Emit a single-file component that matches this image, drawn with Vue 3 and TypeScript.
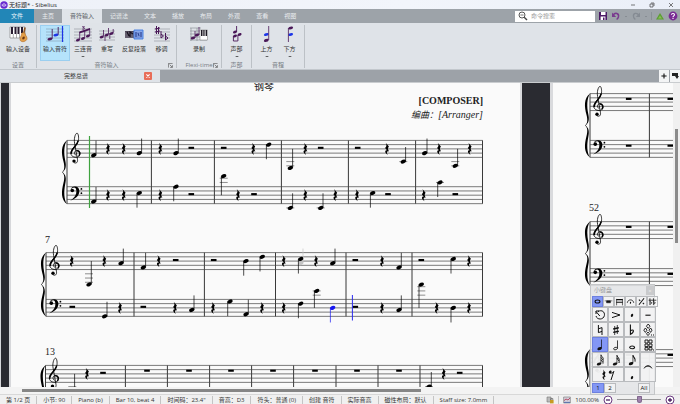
<script setup lang="ts">
interface Shape { d: string; f?: string; s?: string; w?: number }
interface Tool { label: string; icon: Shape[]; width: number; drop?: boolean; active?: boolean }
interface Group { title: string; launcher?: boolean; tools: Tool[] }
interface Item { kind: 'q' | 'r' | 'h' | 'w'; x: number; step: number; up: boolean; color: string }
interface Staff { top: number; clef: 'g' | 'f'; items: Item[] }
interface System { left: number; right: number; bars: number[]; staves: Staff[] }

const P = '#4a1858'
const B = '#1c35e8'
const G = '#8d9299'
const lines = 'M1 3H19M1 6H19M1 9H19M1 12H19M1 15H19'
const head = (x: number, y: number, r = 2) => `M${x - r} ${y + 0.6}C${x - r} ${y - 1.6} ${x + r} ${y - 2.4} ${x + r} ${y - 0.4}C${x + r} ${y + 1.8} ${x - r} ${y + 2.2} ${x - r} ${y + 0.6}Z`

const menus = ['主页', '音符输入', '记谱法', '文本', '播放', '布局', '外观', '查看', '视图']

const groups: Group[] = [
  { title: '设置', tools: [{ label: '输入设备', width: 30, icon: [
    { d: 'M2 1H17V12H2Z', f: '#fff', s: '#777', w: 0.6 },
    { d: 'M3 1H5V8H3ZM6.5 1H8.5V8H6.5ZM9.5 1H11.5V8H9.5ZM13 1H15V7H13Z', f: '#281c30' },
    { d: 'M5.3 8V12M8.5 8V12M11.5 8V12', s: '#777', w: 0.6 },
    { d: 'M15.5 8.5L17 1.5', s: '#8e5625', w: 1.6 },
    { d: 'M13.5 7.5C15 6 17 6.5 17.2 8C17.2 9.6 19 10 19 12.5C19 16 12 17 12 13.3C12 10.5 13.8 10 13.5 7.5Z', f: '#e4a04a', s: '#b06a25', w: 0.6 },
    { d: head(15.5, 12, 1.3), f: '#6b3713' } ] }] },
  { title: '音符输入', launcher: true, tools: [
    { label: '输入音符', width: 30, active: true, icon: [
      { d: lines, s: '#7f9cae', w: 0.6 }, { d: head(5, 13, 2.5), f: P }, { d: 'M7.2 12.5V3', s: P, w: 0.9 },
      { d: head(11, 9, 2.5), f: B }, { d: 'M13.2 8.5V1', s: P, w: 0.9 }, { d: 'M17.5 0V16', s: B, w: 1.2 } ] },
    { label: '三连音', width: 26, drop: true, icon: [
      { d: lines, s: G, w: 0.6 }, { d: head(5, 14) + head(10, 12.5) + head(15, 10), f: P },
      { d: 'M6.7 14V6M11.7 12V4.5M16.7 10V3', s: P, w: 0.8 }, { d: 'M6.4 5.5L17 2V4L6.4 7.5Z', f: P },
      { d: 'M9 .8H11.5L10.2 1.9C12.5 2 11.5 4 9.2 3', s: P, w: 0.8 } ] },
    { label: '重写', width: 22, icon: [
      { d: 'M2 5H18M2 8H18M2 11H18M2 14H18', s: G, w: 0.6 }, { d: head(4.8, 11) + head(9.8, 9) + head(14.5, 7.5), f: P },
      { d: 'M6.5 10V4M8 9V15M12.8 7V13M16.2 7V3M11.5 8V2', s: P, w: 0.8 } ] },
    { label: '反复段落', width: 32, icon: [
      { d: 'M1 5H11V12H1Z', f: '#4b4455' }, { d: 'M1 7H11M1 9H11M1 11H11', s: '#b5b2bd', w: 0.5 },
      { d: 'M3 6L5 10M6 11V6L9 8', s: '#16101e', w: 1.2 }, { d: 'M10 4H19V13H10Z', f: '#8aa8ea', s: '#3c78e0', w: 0.9 },
      { d: 'M11 7H18M11 9H18M11 11H18', s: '#3c5ba7', w: 0.5 }, { d: 'M12 11V6M14 7L15 10M17 11V6', s: '#293f91', w: 1 } ] },
    { label: '移调', width: 23, icon: [
      { d: 'M2 3H18M2 6H18M2 9H18M2 12H18M2 15H18', s: G, w: 0.6 },
      { d: 'M4.5 0V8M6.5 1V8M3 3L8 2M3 6L8 5M9 5V12L11.5 10L9 8M13.5 7V14L16 12L13.5 10', s: P, w: 1 } ] } ] },
  { title: 'Flexi-time', launcher: true, tools: [{ label: '录制', width: 38, icon: [
    { d: 'M2 2V15M8 2V15M1 2H12M1 5H12M1 8H12M1 11H12M1 14H18', s: G, w: 0.7 },
    { d: head(4, 12, 2.3) + head(8, 9, 2.2), f: P }, { d: 'M6 12V5M10 9V1', s: P, w: 0.8 },
    { d: 'M11 4H18.5V14H11Z', f: '#fff', s: '#777', w: 0.5 }, { d: 'M12 4H13.5V10H12ZM14.3 4H15.6V10H14.3ZM16.6 4H18V10H16.6Z', f: '#1c1822' } ] }] },
  { title: '声部', tools: [{ label: '声部', width: 23, drop: true, icon: [
    { d: head(8, 6) + head(8, 10) + head(12.6, 8.5), f: P }, { d: 'M9.6 6V0M6.4 10V15H10.8M10.9 9V15', s: P, w: 0.9 } ] }] },
  { title: '音程', tools: [
    { label: '上方', width: 23, drop: true, icon: [
      { d: head(9.3, 8.5, 2.4), f: B }, { d: head(9.3, 14.4, 2.4), f: P }, { d: 'M11.7 0V14', s: P, w: 0.8 } ] },
    { label: '下方', width: 23, drop: true, icon: [
      { d: head(10.7, 8.5, 2.4), f: B }, { d: head(10.7, 2, 2.4), f: P }, { d: 'M8.4 2V16', s: P, w: 0.8 } ] } ] },
]

/* Tokens: q = quarter note with its step below the top line and stem, r/h/w = quarter, half, whole rest. */
function parse(src: string): Item[] {
  return src.split(' ').map((t) => {
    const [head0, pitch = '0', dir = 'u', color = '#000'] = t.split(',')
    return { kind: head0[0] as Item['kind'], x: Number(head0.slice(1)), step: Number(pitch), up: dir === 'u', color }
  })
}

const systems: System[] = [
  { left: 67, right: 482.6, bars: [151.4, 214.4, 281.4, 348.4, 415.6, 482.5], staves: [
    { top: 140.4, clef: 'g', items: parse('q93.7,7 r108 r123.7 q139.3,6 r160.3 q176,6 h191.3 h223.7 r253.3 q268.7,2,d q290.3,13 r305.3 h320.7 h357.7 r387 q403.3,10 q424.7,6 r439 q455.3,12 r469.7') },
    { top: 186.7, clef: 'f', items: parse('q93.7,7 r108 r123.7 q139.3,3,d r160.3 q176,0,d h191.3 q223.7,-5,d r238 h254 q290.3,10 r305.3 q320.7,10 r335.3 r357 q372.7,3,d h388 r423.7 q440,-2,d h455.3') } ] },
  { left: 46, right: 482.6, bars: [134, 204.4, 275.5, 346, 412, 482.5], staves: [
    { top: 252.6, clef: 'g', items: parse('r71.7 q89,15 r104.3 q121,5 q143.3,7 r158.7 h175.7 h213.7 q246,4,d q262.3,2,d r283.7 q300.7,5,u,#c4c4c4 q300.7,3,d r316 q332.7,5 h355.3 r382 q399,7 h421.3 q453.3,3,d r469') },
    { top: 299.4, clef: 'f', items: parse('h72.3 q104.7,8 r120 h143.3 r175 q191.7,5 r213 q230,1,d q246,7 r262 r283.7 q300.7,2,d q316.7,-4,d q332.7,4,d,#1818f0 h355.3 r382 q399,5 q421.3,-7,d r436.7 q453.3,4,d r469') } ] },
  { left: 45.5, right: 482.6, bars: [125.4, 167.4, 209.6, 251.6, 293.6, 336, 378, 420, 482.5], staves: [
    { top: 365.4, clef: 'g', items: parse('q72.3,12 r87 h103 w147 w189 w231 w273 w315 w357 w399 q429,10 r443.7 h459.7') },
    { top: 412, clef: 'f', items: [] } ] },
  { left: 590, right: 1200, bars: [649.4], staves: [
    { top: 93.6, clef: 'g', items: parse('w628.7 w670.3') }, { top: 140.4, clef: 'f', items: parse('w628.7 w670.3') } ] },
  { left: 590, right: 1200, bars: [649.4], staves: [
    { top: 221.6, clef: 'g', items: parse('w628.7 w670.3') }, { top: 268.6, clef: 'f', items: parse('w628.7 w670.3') } ] },
  { left: 590, right: 1200, bars: [649.4], staves: [
    { top: 349.6, clef: 'g', items: parse('w628.7 w670.3') }, { top: 396.4, clef: 'f', items: [] } ] },
]

const HALF = 2.12
const yOf = (s: Staff, step: number) => s.top + step * HALF
const stemX = (n: Item) => n.x + (n.up ? 2.3 : -2.3)
function stemEnd(s: Staff, n: Item): number {
  const y = yOf(s, n.step)
  return n.up ? Math.min(y - 14.6, yOf(s, 4)) : Math.max(y + 14.6, yOf(s, 4))
}
function ledgers(n: Item): number[] {
  const out: number[] = []
  for (let k = 10; k <= n.step; k += 2) out.push(k)
  for (let k = -2; k >= n.step; k -= 2) out.push(k)
  return out
}

const restPath = 'M-1.3 -6.2L1.9 -2.4C.5 -.8 .8 .4 2.1 2.6C-.2 1.8 -.7 3.8 .8 6C-2.8 3.8 -2.2 .9 .2 1.5L-1.9 -1C-.2 -2.6 -.2 -4 -1.3 -6.2Z'
const bracePath = 'M5 -32C-1.4 -27 -.6 -19 1.4 -11C3 -5 2.4 -2 0 0C2.4 2 3 5 1.4 11C-.6 19 -1.4 27 5 32C1.8 27 1.8 19 3.2 12C4.6 6 3.8 2.6 .6 0C3.8 -2.6 4.6 -6 3.2 -12C1.8 -19 1.8 -27 5 -32Z'

const note = (x: number, y: number, h: number) => head(x, y, 2.2) + `M${x + 1.6} ${y}V${y - h}H${x + 2.3}V${y}Z`
const K = '#111'
const padTabs: { name: string; icon: Shape[]; on?: boolean }[] = [
  { name: '常用音符', on: true, icon: [{ d: 'M3.2 7C3.2 3.8 10.8 3.8 10.8 7C10.8 10.2 3.2 10.2 3.2 7Z', s: K, w: 1.7 }] },
  { name: '更多音符', icon: [{ d: 'M1 6H13M4 6V9H10V6Z', f: K, s: K, w: 0.8 }] },
  { name: '符杠', icon: [{ d: 'M2 3H12V5H2ZM2 7.5H12V9H2Z', f: K }, { d: 'M2.5 3V13M11.6 3V13', s: K, w: 1 }] },
  { name: '演奏法', icon: [{ d: 'M2 9C3 3 11 3 12 9', s: K, w: 1.3 }, { d: head(7, 9, 1), f: K }] },
  { name: '爵士', icon: [{ d: 'M3 12L11 2M3 4L5 6M9 9L11 11', s: K, w: 1.6 }] },
  { name: '变音记号', icon: [{ d: 'M3 2V12L6 9L3 7M8.5 2V12L11.5 9L8.5 7M1 5H13', s: K, w: 1.2 }] },
]
interface Key { name: string; icon: Shape[]; cls?: string }
const keys: Key[] = [
  { name: '输入', icon: [{ d: 'M5 3.5C9 1.4 12 4 11.4 7.5C10.5 12 4 12.2 3 8M6.8 8L3 3.5M3 6V3H6', s: K, w: 1 }] },
  { name: '重音', icon: [{ d: 'M3 4.4L11 7L3 9.6', s: K, w: 1 }] },
  { name: '断奏', icon: [{ d: head(7, 7.4, 1.2), f: K }] },
  { name: '保持音', icon: [{ d: 'M4.4 7.2H9.6', s: K, w: 1.1 }] },
  { name: '还原', icon: [{ d: 'M5.4 2V9.6L9 8.4M5.4 5.8L9 4.6V12', s: K, w: 1 }] },
  { name: '升号', icon: [{ d: 'M5.7 3V12M8.3 2V11', s: K, w: 0.8 }, { d: 'M4.2 6L9.8 4.8M4.2 9.4L9.8 8.2', s: K, w: 1.4 }] },
  { name: '降号', icon: [{ d: 'M5.4 1.6V11.4C10 8.6 8.8 5.6 5.4 7.8', s: K, w: 1.1 }] },
  { name: '更多升降号', icon: [{ d: 'M7.2 1L9 3.2L7.2 5.4L5.4 3.2ZM4.4 5L6 7.2L4.4 9.4L2.8 7.2ZM9.6 5L11 7.2L9.6 9.4L8 7.2ZM7 9L8.5 10.8L7 12.6L5.5 10.8Z', s: K, w: 0.9 }, { d: 'M10 12H11M12 12H13', s: K, w: 1 }] },
  { name: '四分音符', cls: 'on', icon: [{ d: note(6.6, 10.6, 9), f: K }] },
  { name: '二分音符', icon: [{ d: 'M4.6 10.8C5 9 8.4 8.8 8.4 10.2C8.2 12 4.8 12.4 4.6 10.8Z', s: K, w: 0.9 }, { d: 'M8.5 10.4V2.4', s: K, w: 0.8 }] },
  { name: '全音符', icon: [{ d: 'M4.6 9.4C5 7.6 9.4 7.6 9.6 9.4C9.4 11.2 5 11.2 4.6 9.4Z', s: K, w: 1.1 }] },
  { name: '更多时值', icon: [{ d: 'M4 2H7V5H4ZM8 2H11V5H8ZM4 6H7V8.6H4ZM8 6H11V8.6H8ZM4 9.6H7V12H4ZM8 9.6H11V12H8Z', s: K, w: 0.9 }, { d: 'M12 12H13', s: K, w: 1 }] },
  { name: '三十二分音符', icon: [{ d: note(6, 11, 9.6), f: K }, { d: 'M8 2C8.4 4 11 4 10 7M8 4.4C8.4 6.4 11 6.4 10 9M8 6.8C8.4 8.6 10.6 8.6 10 10.6', s: K, w: 0.9 }] },
  { name: '十六分音符', icon: [{ d: note(6, 11, 9), f: K }, { d: 'M8 2.4C8.4 4.8 11 5 10 8M8 5C8.4 7 11 7.4 10 10', s: K, w: 1 }] },
  { name: '八分音符', icon: [{ d: note(6, 10.6, 8.6), f: K }, { d: 'M8 2.4C8.4 5 11.2 5 10 8.6', s: K, w: 1.1 }] },
  { name: '连音线', cls: 'tall', icon: [{ d: 'M3 8.4C5 4.6 9 4.6 11 8.4C9 5.6 5 5.6 3 8.4Z', f: K, s: K, w: 0.5 }] },
  { name: '休止符', cls: 'wide', icon: [{ d: 'M2 1.6L4.6 4.8C3.4 6 3.6 7 4.8 9C3 8.4 2.6 10 3.8 12C.6 10 1.2 7.8 3.2 8.2L1.2 6C2.8 4.4 2.8 3.4 2 1.6Z' + head(9.2, 4, 1.4), f: K }, { d: 'M9 5C11 5.4 12 4.6 12.8 3.4L10 12', s: K, w: 1 }] },
  { name: '附点', icon: [{ d: head(7, 9.6, 1.2), f: K }] },
]

const status = ['第 1/2 页', '小节: 90', 'Piano (b)', 'Bar 10, beat 4', '时间码：23.4"', '音高：D3', '符头：普通 (0)', '创建 音符', '实际音高', '磁性布局：默认', 'Staff size: 7.0mm']
</script>

<template>
  <div class="app">
    <header class="title">
      <svg class="logo" viewBox="0 0 8 8"><circle cx="4" cy="4" r="3.7" fill="#6a2bd0" /><path d="M2.3 5.2V3.2M4 6V2M5.7 5.2V3.2" stroke="#fff" stroke-width=".8" /></svg>
      <span>无标题* - Sibelius</span>
      <div class="window">
        <button aria-label="最小化"><svg viewBox="0 0 6 6"><path d="M1 3H5" /></svg></button>
        <button aria-label="还原"><svg viewBox="0 0 6 6"><path d="M1 2H4V5H1ZM2 1H5V4" /></svg></button>
        <button aria-label="关闭"><svg viewBox="0 0 6 6"><path d="M1 1L5 5M5 1L1 5" /></svg></button>
      </div>
    </header>

    <nav class="menu">
      <button class="file">文件</button>
      <button v-for="m in menus" :key="m" :class="{ current: m === '音符输入' }">{{ m }}</button>
      <div class="quick">
        <label class="search">
          <svg viewBox="0 0 10 10"><circle cx="4" cy="4" r="3" fill="none" stroke="#555" /><path d="M6.2 6.2L9 9" stroke="#444" stroke-width="1.4" /><path d="M2.4 4H5.6" stroke="#777" /></svg>
          <input type="text" placeholder="命令搜索" aria-label="命令搜索" />
        </label>
        <button aria-label="保存"><svg viewBox="0 0 10 10"><path d="M1 1H9V9H1Z" fill="#4c1a66" /><path d="M3 1H7.5V4H3ZM2.6 5.5H7.4V9H2.6Z" fill="#fff" /><path d="M5 6.5H6.5V9H5Z" fill="#4c1a66" /></svg></button>
        <button aria-label="撤销"><svg viewBox="0 0 10 10"><path d="M2 4.4C4 1 8.4 2 7.4 6C7 7.4 6.4 8 5.6 8.4" fill="none" stroke="#7a3b8f" stroke-width="1.5" /><path d="M1 1.6V6H5.2Z" fill="#7a3b8f" /></svg></button>
        <i class="arrow"></i>
        <button aria-label="重做"><svg viewBox="0 0 10 10"><path d="M8 4.4C6 1 1.6 2 2.6 6C3 7.4 3.6 8 4.4 8.4" fill="none" stroke="#858b93" stroke-width="1.3" /><path d="M9 1.6V6H4.8Z" fill="#858b93" /></svg></button>
        <i class="arrow"></i>
        <i class="rule"></i>
        <button aria-label="上传"><svg viewBox="0 0 10 10"><path d="M5 2L9 8.4H1Z" fill="#5c9e32" /><path d="M5 4.4L7 7.6H3Z" fill="#86bd55" /></svg></button>
        <button aria-label="帮助"><svg viewBox="0 0 10 10"><circle cx="5" cy="5" r="4.4" fill="#792a94" /><path d="M3.4 3.8C3.6 2 6.8 2.2 6.4 4C6.2 5 5 5 5 6.2M5 7V8" fill="none" stroke="#fff" stroke-width="1.1" /></svg></button>
      </div>
    </nav>

    <section class="ribbon">
      <div v-for="(g, gi) in groups" :key="gi" class="group">
        <div class="tools">
          <button v-for="t in g.tools" :key="t.label" class="tool" :class="{ active: t.active }" :style="{ width: t.width + 'px' }">
            <svg viewBox="0 0 20 17"><path v-for="(s, i) in t.icon" :key="i" :d="s.d" :fill="s.f ?? 'none'" :stroke="s.s ?? 'none'" :stroke-width="s.w ?? 0" /></svg>
            <span>{{ t.label }}</span>
            <i v-if="t.drop" class="arrow dark"></i>
          </button>
        </div>
        <footer>
          <span>{{ g.title }}</span>
          <button v-if="g.launcher" :aria-label="g.title + '设置'"><svg viewBox="0 0 6 6"><path d="M.5 5.5V.5H5.5M2 2L5 5M5.3 2.6V5.3H2.6" fill="none" stroke="#555" stroke-width=".8" /></svg></button>
        </footer>
      </div>
    </section>

    <div class="docs">
      <div class="doc"><span>完整总谱</span><button aria-label="关闭标签"><svg viewBox="0 0 8 8"><path d="M2.4 2.4L5.6 5.6M5.6 2.4L2.4 5.6" stroke="#fff" stroke-width="1.1" /></svg></button></div>
      <button class="small" aria-label="新建标签"><svg viewBox="0 0 10 10"><path d="M2.4 5H7.6M5 2.4V7.6" stroke="#111" stroke-width="1.1" /></svg></button>
      <button class="small" aria-label="标签菜单"><svg viewBox="0 0 10 10"><path d="M2 2H8V5H2ZM5 5H9L7 8Z" fill="#222" /></svg></button>
    </div>

    <main class="stage">
      <svg class="score" role="img" aria-label="乐谱">
        <g transform="translate(0 -83)">
          <rect x="0" y="83" width="100%" height="100%" fill="#fafafa" />
          <g class="desk">
            <rect x="0" y="83" width="11" height="100%" fill="#d6d7da" /><rect x="1" y="83" width="8" height="100%" fill="#2a2b31" />
            <rect x="520" y="83" width="33" height="100%" fill="#d9dadd" /><rect x="522" y="83" width="28" height="100%" fill="#2a2b31" />
          </g>
          <text x="264" y="90" class="part" text-anchor="middle">钢琴</text>
          <text x="483" y="104" class="composer" text-anchor="end">[COMPOSER]</text>
          <text x="483" y="118" class="arranger" text-anchor="end"><tspan class="han">编曲：</tspan>[Arranger]</text>
          <text x="45" y="243" class="bar-no">7</text>
          <text x="45" y="355" class="bar-no">13</text>
          <text x="589" y="211" class="bar-no">52</text>
          <g v-for="(sys, si) in systems" :key="si">
            <path :d="bracePath" :transform="`translate(${sys.left - 5} ${sys.staves[0].top + 31.8})`" />
            <g class="bars">
              <path v-for="x in [sys.left, ...sys.bars]" :key="x" :d="`M${x} ${sys.staves[0].top}V${sys.staves[1].top + 17}`" />
            </g>
            <g v-for="(st, ti) in sys.staves" :key="ti">
              <path v-for="n in 5" :key="n" class="line" :d="`M${sys.left} ${yOf(st, (n - 1) * 2)}H${sys.right}`" />
              <g v-if="st.clef === 'g'" :transform="`translate(${sys.left + 8.6} ${yOf(st, 6)})`" class="clef">
                <path d="M.6 2.2C-1.8 1.4 -1.6 -2.4 1.2 -2.7C4.6 -2.7 5.4 1.4 3 3.4C.4 5 -4.6 4 -4.8 0C-4.8 -5 2.2 -8 2.9 -13.4C3.3 -17 2.4 -20 1.4 -20C-.6 -19.4 -1.8 -14 -1 -10L1.9 6.4C2.3 9.6 .4 10.4 -1.4 9.6" />
                <path class="bold" d="M-4.4 .8C-4.8 -4.4 1.6 -7 2.6 -12.6M1 -2.4C4.4 -2.6 5 1 3.2 2.8" />
                <circle cx="-1.6" cy="8" r="1.7" />
              </g>
              <g v-else :transform="`translate(${sys.left + 3} ${yOf(st, 2)})`">
                <path d="M.6 -1C1.2 -5.6 9.4 -5.6 9.4 .1C9.4 5.2 4.6 8.2 .2 9.8C4.4 7 6.6 4 6.4 .1C6.2 -4.2 3 -4.4 .6 -1Z" />
                <circle cx="2.3" cy="-.5" r="1.8" /><circle cx="11.4" cy="-2" r=".9" /><circle cx="11.4" cy="2.2" r=".9" />
              </g>
              <g v-for="(n, ni) in st.items" :key="ni">
                <template v-if="n.kind === 'q'">
                  <path v-for="k in ledgers(n)" :key="k" class="ledger" :d="`M${n.x - 4} ${yOf(st, k)}H${n.x + 4}`" />
                  <ellipse rx="2.8" ry="1.9" :fill="n.color" :transform="`translate(${n.x} ${yOf(st, n.step)}) rotate(-22)`" />
                  <path class="stem" :stroke="n.color" :d="`M${stemX(n)} ${yOf(st, n.step)}V${stemEnd(st, n)}`" />
                </template>
                <path v-else-if="n.kind === 'r'" :d="restPath" :transform="`translate(${n.x} ${yOf(st, 4)})`" />
                <rect v-else :x="n.x - 2.8" :y="n.kind === 'h' ? yOf(st, 4) - 2.1 : yOf(st, 2)" width="5.6" height="2.1" />
              </g>
            </g>
          </g>
          <path d="M89.5 136V208" stroke="#3fa33f" stroke-width="1.2" />
          <path d="M352.4 295V320.5" stroke="#2a2af0" stroke-width="1" />
        </g>
      </svg>
      <div class="vscroll"><i></i></div>
    </main>
    <div class="hscroll"><i></i></div>

    <footer class="status">
      <span v-for="s in status" :key="s">{{ s }}</span>
      <div class="zoom">
        <svg viewBox="0 0 8 8"><path d="M1 1H5V6H1Z" fill="#bbb" stroke="#777" stroke-width=".6" /><path d="M4 4H7.6V7.4H4Z" fill="#c79a22" /><path d="M4.8 4V2.6H6.8V4" fill="none" stroke="#555" stroke-width=".7" /></svg>
        <i></i>
        <svg viewBox="0 0 8 8"><path d="M.6 1H7.4V7H.6Z" fill="#d5d0dc" stroke="#777" stroke-width=".6" /><path d="M1 4.6L3 3L5 4L7 2" fill="none" stroke="#b44f68" /><path d="M1 6.4H7" stroke="#3f5da8" stroke-width=".8" /></svg>
        <output>100.00%</output>
        <button aria-label="缩小"><svg viewBox="0 0 10 10"><circle cx="5" cy="5" r="4" fill="#fff" stroke="#6c3b82" /><path d="M3 5H7" stroke="#4a2360" stroke-width="1.3" /></svg></button>
        <input type="range" min="0" max="100" value="50" aria-label="缩放" />
        <button aria-label="放大"><svg viewBox="0 0 10 10"><circle cx="5" cy="5" r="4" fill="#fff" stroke="#6c3b82" /><path d="M3 5H7M5 3V7" stroke="#4a2360" stroke-width="1.3" /></svg></button>
      </div>
    </footer>

    <aside class="keypad">
      <header><span>小键盘</span><button aria-label="关闭小键盘">×</button></header>
      <div class="layouts">
        <button v-for="t in padTabs" :key="t.name" :class="{ on: t.on }" :aria-label="t.name">
          <svg viewBox="0 0 14 14"><path v-for="(s, i) in t.icon" :key="i" :d="s.d" :fill="s.f ?? 'none'" :stroke="s.s ?? 'none'" :stroke-width="s.w ?? 0" /></svg>
        </button>
      </div>
      <div class="keys">
        <button v-for="k in keys" :key="k.name" :class="k.cls" :aria-label="k.name">
          <svg viewBox="0 0 14 14"><path v-for="(s, i) in k.icon" :key="i" :d="s.d" :fill="s.f ?? 'none'" :stroke="s.s ?? 'none'" :stroke-width="s.w ?? 0" /></svg>
        </button>
      </div>
      <footer><button class="on">1</button><button>2</button><button class="all">All</button></footer>
    </aside>
  </div>
</template>

<style>
body { margin: 0; overflow: hidden; }
</style>

<style scoped>
* { box-sizing: border-box; }
.app { position: relative; display: flex; flex-direction: column; height: 100vh; font: 6px/8px "Open Sans", "Noto Sans CJK SC", sans-serif; color: #333; background: #f0f0f0; }
button { font: inherit; color: inherit; border: 0; padding: 0; margin: 0; background: none; display: flex; align-items: center; justify-content: center; }
svg { display: block; flex: none; }
.title { display: flex; align-items: center; gap: 1px; height: 9px; flex: none; padding: 0 6px 0 0; background: linear-gradient(90deg, #eef1f8, #f2f5fb 60%, #eaeff8); color: #222; }
.logo { width: 8px; height: 8px; }
.window { display: flex; gap: 13px; margin-left: auto; }
.window svg { width: 6px; height: 6px; fill: none; stroke: #444; stroke-width: .7; }
.menu { display: flex; height: 14px; flex: none; background: #9da3a9; color: #e9ecef; }
.menu > button { padding: 0 8px; }
.menu > .file { padding: 0 11px; background: #2286b7; color: #e8f4fb; }
.menu > .current { background: #e0e4e9; color: #555b62; }
.quick { display: flex; align-items: center; gap: 3px; margin-left: auto; padding-right: 2px; }
.quick button svg { width: 10px; height: 10px; }
.search { display: flex; align-items: center; gap: 3px; width: 80px; height: 11px; padding: 0 3px; background: #fff; }
.search svg { width: 10px; height: 10px; }
.search input { flex: 1; min-width: 0; border: 0; outline: 0; padding: 0; font: inherit; background: none; }
.search input::placeholder { color: #999; }
.arrow { width: 0; height: 0; margin: 0 1px; border: 1px solid transparent; border-top-color: #73797f; border-bottom-width: 0; }
.arrow.dark { margin-top: 3px; border-top-color: #333; border-left-width: 2px; border-right-width: 2px; }
.rule { width: 1px; height: 8px; background: #8a9096; }
.ribbon { display: flex; height: 47px; flex: none; padding: 2px 0 1px; background: #dfe3e8; border-bottom: 1px solid #c3c8cd; }
.group { display: flex; flex-direction: column; justify-content: space-between; padding: 0 3px; border-right: 1px solid #bcc1c6; }
.tools { display: flex; }
.tool { flex-direction: column; justify-content: flex-start; height: 36px; padding-top: 1px; white-space: nowrap; }
.tool svg { width: 20px; height: 17px; margin-bottom: 2px; }
.tool.active { background: #b5e3fb; outline: 1px solid #9bcff0; outline-offset: -1px; }
.group footer { position: relative; display: flex; justify-content: center; align-items: center; color: #777d84; }
.group footer button { position: absolute; right: 0; }
.group footer svg { width: 5px; height: 5px; }
.docs { display: flex; height: 13px; flex: none; background: #9da2a8; border-bottom: 1px solid #c9cccf; gap: 1px; }
.doc { display: flex; align-items: center; width: 160px; padding: 0 8px; margin-right: auto; background: #dfe3e8; }
.doc span { flex: 1; text-align: center; }
.doc button { background: #e86d58; border-radius: 1px; }
.doc svg { width: 8px; height: 8px; }
.small { background: #f3f4f5; }
.small svg { width: 10px; height: 10px; }
.stage { display: grid; grid-template-columns: 1fr 7px; flex: 1; min-height: 0; }
.score { width: 100%; height: 100%; overflow: hidden; font-family: "Liberation Serif", "Noto Sans CJK SC", serif; fill: #000; }
.score text { fill: #222; }
.part { font-size: 10px; }
.composer { font-size: 10px; font-weight: bold; }
.arranger { font-size: 10px; font-style: italic; }
.han { font-size: 9px; }
.bar-no { font-size: 10px; }
.line { stroke: #444; stroke-width: .7; }
.bars path { stroke: #222; stroke-width: .9; }
.ledger { stroke: #444; stroke-width: .6; }
.stem { stroke-width: .7; }
.clef path { fill: none; stroke: #000; stroke-width: .8; }
.clef .bold { stroke-width: 1.5; }
.vscroll { display: grid; grid-template-rows: 46fr 114fr 144fr; padding: 0 2px; background: #f0f0f0; }
.vscroll i { grid-row: 2; background: #8b8b8b; }
.hscroll { display: grid; grid-template-columns: 22fr 399fr 259fr; height: 7px; flex: none; padding: 2px 0; background: #f3f3f3; }
.hscroll i { grid-column: 2; background: #868686; }
.status { display: flex; align-items: center; height: 10px; flex: none; background: #f0f0f0; border-top: 1px solid #d8d8d8; white-space: nowrap; }
.status > span { padding: 0 6px; border-right: 1px solid #c4c4c4; }
.zoom { display: flex; align-items: center; gap: 4px; margin-left: auto; padding-right: 5px; }
.zoom > svg { width: 8px; height: 8px; }
.zoom > i { width: 1px; height: 8px; background: #c4c4c4; }
.zoom button svg { width: 10px; height: 10px; }
.zoom input { appearance: none; width: 44px; height: 8px; margin: 0; background: linear-gradient(#999, #999) center / 100% 1px no-repeat; }
.zoom input::-webkit-slider-thumb { appearance: none; width: 5px; height: 7px; background: #9f83ad; border: 1px solid #80668d; border-radius: 1px 1px 3px 3px; }
.keypad { position: absolute; right: 25px; bottom: 9px; display: flex; flex-direction: column; gap: 1px; width: 65px; padding: 1px 4px 1px 1px; background: rgba(226, 227, 229, .86); border: 1px solid #c4c6c8; }
.keypad header { display: flex; justify-content: space-between; height: 9px; padding-left: 2px; margin-right: -4px; color: #999; }
.keypad header button { width: 8px; background: #c9cacc; color: #eee; }
.layouts { display: grid; grid-template-columns: repeat(6, 1fr); height: 10px; }
.keypad .layouts button, .keys button, .keypad footer button { background: rgba(246, 246, 247, .7); border: 1px solid #b9bbbe; }
.layouts svg { width: 9px; height: 9px; }
.keys { display: grid; grid-template-columns: repeat(4, 1fr); grid-auto-rows: 15px; }
.keys svg { width: 14px; height: 14px; }
.keys .tall { grid-row: 4 / 6; grid-column: 4; }
.keys .wide { grid-column: span 2; }
.keypad footer { display: flex; height: 10px; }
.keypad footer button { width: 12px; color: #111; }
.keypad footer .all { margin-left: auto; }
.keypad .layouts .on, .keys .on, .keypad footer .on { background: #8397f5; border-color: #6d80df; }
</style>
